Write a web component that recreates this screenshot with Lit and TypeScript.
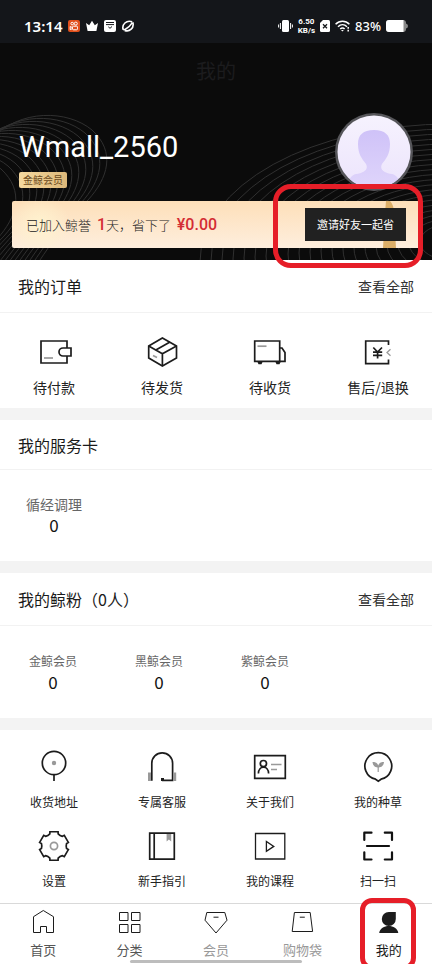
import { LitElement, html, svg, css, SVGTemplateResult } from "lit";
import { customElement, property } from "lit/decorators.js";
import { classMap } from "lit/directives/class-map.js";

const range = (n: number) => Array.from({ length: n }, (_, i) => i);

// Six flat teeth with hollow notches between them, around (18, 18).
const gearPath = (() => {
  const pt = (deg: number, r: number) => {
    const a = (deg * Math.PI) / 180;
    return `${(18 + r * Math.sin(a)).toFixed(2)} ${(18 - r * Math.cos(a)).toFixed(2)}`;
  };
  return (
    range(6)
      .map((i) => {
        const c = i * 60;
        return `${i ? "L" : "M"}${pt(c - 16, 14.8)} L${pt(c + 16, 14.8)} L${pt(c + 19, 12.8)} Q${pt(c + 30, 11.8)} ${pt(c + 41, 12.8)}`;
      })
      .join(" ") + " Z"
  );
})();

const icons: Record<string, SVGTemplateResult> = {
  wallet: svg`
    <path d="M31 14V7H5V29H31V22"/>
    <path d="M35 14H27A4 4 0 0 0 27 22H35Z"/>
    <path class="soft" d="M8 24H17"/>`,
  parcel: svg`
    <path d="M18.4 4L32.5 12V24L18.4 32L4.7 24V12Z"/>
    <path d="M4.7 12L18.4 19.8L32.5 12M18.4 19.8V32M12.3 15.8L26 8"/>
    <path class="soft" d="M9 21.5L13 23.5"/>`,
  truck: svg`
    <path d="M2.7 7H27.7V27.3H2.7Z"/>
    <path d="M27.7 14H30L33 18.5V27.3H27"/>
    <path class="fill" d="M5.5 28H10.5L9.5 30.3H6.5ZM23.5 28H28.5L27.5 30.3H24.5Z"/>
    <path class="soft" d="M5.5 12.2H14.5"/>`,
  refund: svg`
    <path d="M28.5 11V7H5.7V29.7H28.5V25.5"/>
    <path d="M13.3 13.5L17.6 18L22 13.5M17.6 18V24.5M13 18.2H22.2M13 21.4H22.2"/>
    <path class="soft thin" d="M30.5 15.2L27 18.5L30.5 21.8"/>`,
  pin: svg`
    <circle cx="18" cy="14" r="11.7"/><path d="M18 26V32"/>
    <circle class="softfill" cx="18" cy="14" r="2.2"/>`,
  headset: svg`
    <path d="M7.8 31.7V14.3A10.4 10.4 0 0 1 28.6 14.3V31.3H18"/>
    <path class="fill" d="M17 29H20V32H17Z"/>
    <path class="softfill" d="M4 23.5H7V32H4ZM29.4 23.5H32.2V32H29.4Z"/>`,
  card: svg`
    <path d="M2.7 6.7H33.3V29.3H2.7Z"/>
    <circle cx="11.4" cy="14.6" r="3.1"/>
    <path d="M6.4 24.5C6.6 16 16.4 16 16.6 24.5"/>
    <path class="soft" d="M19 15.5H29.5M19 20.5H25"/>`,
  sprout: svg`
    <path d="M15.6 30.2A13.4 13.4 0 1 1 21 30.2L18.3 32.2Z"/>
    <path class="softfill" d="M12.5 13C15.5 13 17.8 14 18.2 16.5C18.8 14 21 13 24 13C23.6 16.8 21.5 18.3 18.8 18.5V23H17.6V18.5C15 18.3 12.9 16.8 12.5 13Z"/>`,
  gear: svg`<path d=${gearPath}/><circle class="soft" cx="18" cy="18" r="3.6"/>`,
  book: svg`
    <path d="M5.7 5.2H30.3V31.2H5.7ZM10.2 5.2V31.2"/>
    <path class="softfill" d="M22.6 6H27.2V13.4L24.9 11.6L22.6 13.4Z"/>`,
  video: svg`
    <path class="thin" d="M3.5 5.5H32.8V31H3.5Z"/>
    <path class="thin" d="M14.4 13.4V23.4L21.8 18.4Z"/>`,
  scan: svg`
    <path class="bold" d="M4.3 12V4.7H11.5M24.8 4.7H32V12M32 24.3V31.5H24.8M11.5 31.5H4.3V24.3M7 18H29"/>`,
  home: svg`<path d="M4.5 9.7L14.3 3.5L24.5 9.7V25.5H17.5V19.5H11.5V25.5H4.5Z"/>`,
  grid: svg`<path d="M3.5 5.5H12V13.5H3.5ZM15.5 5.5H24V13.5H15.5ZM3.5 17.5H12V25.5H3.5ZM15.5 17.5H24V25.5H15.5Z"/>`,
  member: svg`<path d="M4.8 5.5H22.8L25 13.2L14 26L3 13.2ZM11.5 10.2H16.5"/>`,
  bag: svg`<path d="M6.4 5.5H22.2L24.6 24.5H4.2ZM11.8 10.2H16.8"/>`,
  me: svg`<path class="fill" d="M20.8 5V12A7 7 0 1 1 13.8 5ZM4.2 26C5.5 16.8 22 16.8 23.3 26Z"/>`,
};

@customElement("line-icon")
class LineIcon extends LitElement {
  @property() name = "";
  @property({ type: Number }) size = 36;

  static styles = css`
    :host { display: block; }
    svg { display: block; fill: none; stroke: #1c1c1c; stroke-width: 1.7; }
    .small { stroke-width: 1; }
    .thin { stroke-width: 1.3; }
    .bold { stroke: #111; stroke-width: 2.2; stroke-linejoin: round; stroke-linecap: round; }
    .soft { stroke: #999; }
    .fill { fill: #1c1c1c; stroke: none; }
    .softfill { fill: #999; stroke: none; }
  `;

  render() {
    return html`<svg class=${classMap({ small: this.size < 36 })} width=${this.size} height=${this.size}
      viewBox="0 0 ${this.size} ${this.size}" aria-hidden="true">${icons[this.name]}</svg>`;
  }
}

@customElement("status-bar")
class StatusBar extends LitElement {
  static styles = css`
    :host {
      display: flex; align-items: center; justify-content: space-between;
      box-sizing: border-box; height: 43px; padding: 9px 24px 0;
      background: #14161a; color: #fff;
      font-family: "Noto Sans", "Noto Sans CJK SC", sans-serif;
    }
    .side { display: flex; align-items: center; gap: 6px; }
    .right { gap: 5px; }
    .time { font-size: 15px; line-height: 20px; font-weight: 600; }
    .speed { font-family: Roboto, sans-serif; font-size: 8px; line-height: 9px; font-weight: 700; text-align: center; }
    .charge { font-size: 13px; line-height: 18px; font-weight: 500; }
    svg { display: block; }
  `;

  render() {
    return html`
      <div class="side">
        <span class="time">13:14</span>
        <svg width="12" height="12" viewBox="0 0 12 12" fill="none" stroke="#fff">
          <rect width="12" height="12" rx="2" fill="#e2501b" stroke="none"/>
          <circle cx="4.2" cy="3.6" r="1.3"/><circle cx="7.8" cy="3.6" r="1.5"/>
          <rect x="4.5" y="6.2" width="5" height="3.6" rx="1"/><path d="M2.2 6.5L4.5 7.6V8.6L2.2 9.6Z"/>
        </svg>
        <svg width="12" height="12" viewBox="0 0 12 12" fill="#fff">
          <path d="M0 3L3.2 5.2L6 0.8L8.8 5.2L12 3L10.4 11H1.6Z"/>
        </svg>
        <svg width="12" height="12" viewBox="0 0 12 12">
          <rect width="12" height="12" rx="2" fill="#fff"/>
          <path d="M2 2.5H10M2 4.6H10M4.3 6.8L6 8.3L8 6.5" fill="none" stroke="#14161a"/>
        </svg>
        <svg width="12" height="12" viewBox="0 0 12 12" fill="none" stroke="#fff" stroke-width="1.6">
          <path d="M1.2 9.8C-0.5 4.5 4.5 -0.3 10.2 1.8M1.2 9.8L3.4 9.2C5.5 8 8.5 5.5 10.4 2.6M10.8 2.2C12.5 8 7.5 12.3 2.6 10.4"/>
        </svg>
      </div>
      <div class="side right">
        <svg width="15" height="14" viewBox="0 0 15 14">
          <rect x="4" y="1" width="7" height="12" rx="1.5" fill="#fff"/>
          <path d="M2.4 4V10M.6 5.5V8.5M12.6 4V10M14.4 5.5V8.5" stroke="#fff"/>
        </svg>
        <div class="speed"><div>6.50</div><div>KB/s</div></div>
        <svg width="10" height="12" viewBox="0 0 10 12">
          <path d="M3 0H8.5Q10 0 10 1.5V10.5Q10 12 8.5 12H1.5Q0 12 0 10.5V3Z" fill="#fff"/>
          <path d="M3 4.3L7 8.3M7 4.3L3 8.3" stroke="#14161a" stroke-width="1.3"/>
        </svg>
        <svg width="15" height="12" viewBox="0 0 15 12" fill="none" stroke="#fff" stroke-width="1.5">
          <path d="M.6 4.2C4.5.2 10.5.2 14.4 4.2M3 6.7C5.7 4 9.3 4 12 6.7M5.2 9C6.7 7.6 8.3 7.6 9.6 9"/>
          <path d="M6 10L7.4 11.6L8.8 10Z" fill="#fff" stroke="none"/>
          <path d="M13.2 7V11.5" stroke-dasharray="1.8 1"/>
        </svg>
        <span class="charge">83%</span>
        <svg width="22" height="12" viewBox="0 0 22 12">
          <rect width="20" height="12" rx="3" fill="#888"/><path d="M20 3.5Q22 4 22 6T20 8.5Z" fill="#888"/>
          <path d="M3 0H17.5V12H3Q0 12 0 9V3Q0 0 3 0Z" fill="#fff"/>
        </svg>
      </div>`;
  }
}

@customElement("member-hero")
class MemberHero extends LitElement {
  static styles = css`
    :host {
      display: block; position: relative; box-sizing: border-box;
      padding: 0 12px 12px; background: #0b0b0b; color: #fff;
    }
    .waves { position: absolute; inset: 0; width: 100%; height: 100%; fill: none; stroke: #303030; }
    .title { margin: 0; padding: 14px 0 28px; font-size: 20px; line-height: 28px; font-weight: 400; text-align: center; color: #1c1c1e; }
    .user { position: relative; display: flex; justify-content: space-between; padding: 0 7px 10px; }
    .info { display: flex; flex-direction: column; align-items: flex-start; gap: 9px; padding-top: 18px; }
    .name { font-family: Roboto, "Noto Sans CJK SC", sans-serif; font-size: 29px; line-height: 32px; }
    .tag { padding: 0 4px; border-radius: 2px; background: linear-gradient(90deg, #f5d9a0, #dcb87a); color: #6b4a1c; font-size: 10px; line-height: 16px; }
    .avatar { display: block; width: 78px; height: 78px; }
    .banner {
      position: relative; display: flex; align-items: center; justify-content: space-between;
      box-sizing: border-box; height: 47px; padding: 0 14px; border-radius: 2px;
      background: radial-gradient(circle at 28px 24px, #fff3cf 0, #fff3cf00 30px), linear-gradient(#fddfb9, #feeedd);
    }
    .saving { margin: 0; font-size: 13px; line-height: 20px; font-weight: 300; color: #222; }
    .num { margin-left: 3px; font-family: Roboto, "Noto Sans CJK SC", sans-serif; font-size: 16px; font-weight: 500; color: #d42c34; }
    .ribbon { position: absolute; right: 24px; top: 0; height: 47px; width: 14px; }
    .invite { position: relative; width: 101px; height: 33px; padding: 0 0 2px; border: 0; background: #212121; color: #fff; font: 400 11px/16px "Noto Sans CJK SC", sans-serif; white-space: nowrap; }
    .mark { position: absolute; right: -3px; top: -17px; box-sizing: border-box; width: 150px; height: 84px; border: 5px solid #e61e28; border-radius: 18px; pointer-events: none; }
  `;

  render() {
    return html`
      <svg class="waves" viewBox="0 43 432 217" preserveAspectRatio="xMidYMax slice" aria-hidden="true">
        ${range(21).map((i) => svg`<ellipse cx="450" cy=${262 - i} rx=${250 - i * 11} ry=${138 - i * 6}/>`)}
        ${range(14).map((i) => svg`<path transform="translate(${-i * 7} ${i * 3})"
          d="M-10 140C20 108 68 110 92 130C116 152 108 178 88 200C62 226 50 245 30 275"/>`)}
      </svg>
      <h1 class="title">我的</h1>
      <div class="user">
        <div class="info">
          <span class="name">Wmall_2560</span>
          <span class="tag">金鲸会员</span>
        </div>
        <svg class="avatar" viewBox="0 0 78 78" role="img" aria-label="头像">
          <defs>
            <linearGradient id="face" x1="0" y1="0" x2="0" y2="1"><stop offset="0" stop-color="#cfc2f8"/><stop offset="1" stop-color="#e0d6fb"/></linearGradient>
            <linearGradient id="back" x1="0" y1="0" x2="0" y2="1"><stop offset="0" stop-color="#f6f2fe"/><stop offset="1" stop-color="#ece4fc"/></linearGradient>
            <clipPath id="disc"><circle cx="39" cy="39" r="36.5"/></clipPath>
          </defs>
          <circle cx="39" cy="39" r="39" fill="#56565a"/>
          <circle cx="39" cy="39" r="36.5" fill="url(#back)"/>
          <path clip-path="url(#disc)" fill="url(#face)" d="M39 17C50 17 55 22 55 31C55 41 51 46 47 51C44 57 50 60 57 61C62 62 66 68 66 78H12C12 68 16 62 21 61C28 60 34 57 31 51C27 46 23 41 23 31C23 22 28 17 39 17Z"/>
        </svg>
      </div>
      <div class="banner">
        <p class="saving">已加入鲸誉 <span class="num">1</span>天，省下了 <span class="num">¥0.00</span></p>
        <svg class="ribbon" viewBox="0 0 14 47" aria-hidden="true"><path d="M4 0H8Q12 4 12 12L14 47H1L3 12Z" fill="#dcae68"/></svg>
        <button class="invite">邀请好友一起省</button>
        <span class="mark"></span>
      </div>`;
  }
}

interface Entry { icon: string; label: string; }

const orders: Entry[] = [
  { icon: "wallet", label: "待付款" },
  { icon: "parcel", label: "待发货" },
  { icon: "truck", label: "待收货" },
  { icon: "refund", label: "售后/退换" },
];

const tools: Entry[] = [
  { icon: "pin", label: "收货地址" },
  { icon: "headset", label: "专属客服" },
  { icon: "card", label: "关于我们" },
  { icon: "sprout", label: "我的种草" },
  { icon: "gear", label: "设置" },
  { icon: "book", label: "新手指引" },
  { icon: "video", label: "我的课程" },
  { icon: "scan", label: "扫一扫" },
];

const tabs = [
  { icon: "home", label: "首页", tone: "" },
  { icon: "grid", label: "分类", tone: "" },
  { icon: "member", label: "会员", tone: "faded" },
  { icon: "bag", label: "购物袋", tone: "faded" },
  { icon: "me", label: "我的", tone: "active" },
];

@customElement("app-root")
class AppRoot extends LitElement {
  static styles = css`
    :host {
      display: flex; flex-direction: column; min-height: 100vh; overflow: hidden;
      background: #fff; color: #222;
      font-family: "Noto Sans CJK SC", "Noto Sans", sans-serif;
    }
    main { display: flex; flex-direction: column; gap: 12px; background: #f3f3f3; flex: 1; }
    section { background: #fff; }
    .last { flex: 1; }
    .head { display: flex; align-items: center; justify-content: space-between; box-sizing: border-box; height: 53px; padding: 0 18px; border-bottom: 1px solid #f2f2f2; }
    .short { height: 50px; }
    h2 { margin: 0; font-size: 16px; line-height: 24px; font-weight: 400; color: #1a1a1a; }
    a { color: #333; font-size: 14px; line-height: 20px; text-decoration: none; }
    button { padding: 0; border: 0; background: none; color: #222; font-family: inherit; }
    .row { display: grid; grid-template-columns: repeat(4, 1fr); }
    .cell { display: flex; flex-direction: column; align-items: center; }
    .orders { padding: 21px 0 11px; }
    .orders .cell { gap: 7px; font-size: 14px; line-height: 20px; }
    .tools { padding: 19px 0 12px; row-gap: 16px; }
    .tools .cell { gap: 7px; font-size: 12px; line-height: 20px; }
    .stats { padding: 24px 8px 26px 0; }
    .service { padding: 23px 0 26px; }
    .label { font-size: 12px; line-height: 22px; color: #666; }
    .service .label { font-size: 14px; }
    .count { font-size: 17px; line-height: 20px; color: #111; }
    nav { position: relative; display: grid; grid-template-columns: repeat(5, 1fr); box-sizing: border-box; height: 61px; padding-top: 3px; border-top: 1px solid #d9d9d9; background: #fff; }
    .tab { position: relative; display: flex; flex-direction: column; align-items: center; gap: 5px; font-size: 13px; line-height: 20px; color: #555; }
    .faded { color: #999; }
    .active { color: #1a1a1a; }
    .handle { position: absolute; left: 30%; right: 30%; bottom: 1px; height: 3px; border-radius: 2px; background: #bdbdbd; }
    .mark { position: absolute; left: 50%; top: -9px; box-sizing: border-box; width: 56px; height: 72px; margin-left: -29px; border: 5px solid #e61e28; border-radius: 12px; pointer-events: none; }
  `;

  private entries(list: Entry[], kind: string) {
    return html`<div class="row ${kind}">
      ${list.map((e) => html`<button class="cell"><line-icon name=${e.icon}></line-icon><span>${e.label}</span></button>`)}
    </div>`;
  }

  private counts(labels: string[], kind: string) {
    return html`<div class="row ${kind}">
      ${labels.map((l) => html`<div class="cell"><span class="label">${l}</span><span class="count">0</span></div>`)}
    </div>`;
  }

  render() {
    return html`
      <status-bar></status-bar>
      <member-hero></member-hero>
      <main>
        <section>
          <div class="head"><h2>我的订单</h2><a href="#orders">查看全部</a></div>
          ${this.entries(orders, "orders")}
        </section>
        <section>
          <div class="head short"><h2>我的服务卡</h2></div>
          ${this.counts(["循经调理"], "service")}
        </section>
        <section>
          <div class="head"><h2>我的鲸粉（0人）</h2><a href="#fans">查看全部</a></div>
          ${this.counts(["金鲸会员", "黑鲸会员", "紫鲸会员"], "stats")}
        </section>
        <section class="last">${this.entries(tools, "tools")}</section>
      </main>
      <nav>
        ${tabs.map((t) => html`<button class="tab ${t.tone}">
          <line-icon name=${t.icon} .size=${28}></line-icon><span>${t.label}</span>
          ${t.tone === "active" ? html`<span class="mark"></span>` : ""}
        </button>`)}
        <span class="handle"></span>
      </nav>`;
  }
}
